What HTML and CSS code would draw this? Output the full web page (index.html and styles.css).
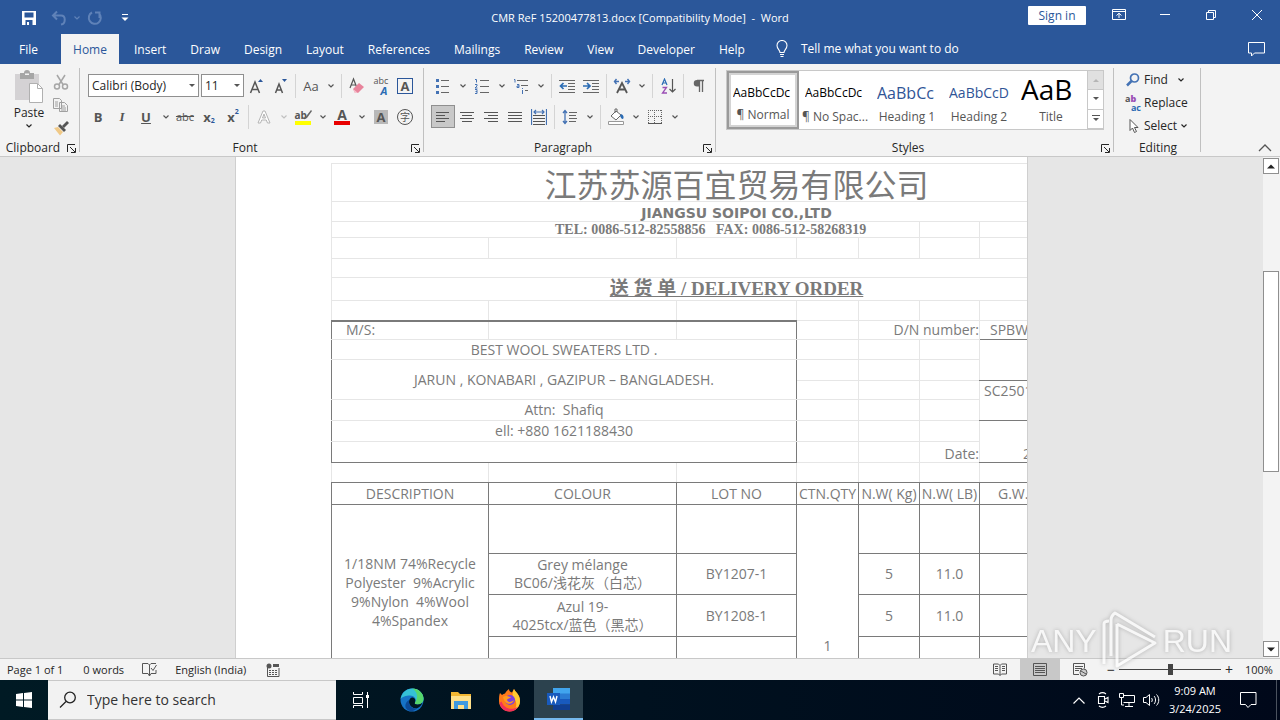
FILE: index.html
```html
<!DOCTYPE html>
<html lang="en">

<head>
    <meta charset="UTF-8">
    <title>CMR ReF 15200477813.docx - Word</title>
    <link rel="stylesheet" href="styles.css">
</head>

<body>
<svg class="defs" aria-hidden="true">
    <symbol id="down" viewBox="0 0 8 8"><path d="M1.5 2.5L4 5l2.5-2.5" fill="none" stroke="currentColor" stroke-width="1.2"/></symbol>
    <symbol id="launch" viewBox="0 0 9 9"><path d="M.5 8V.5H8M3 3l5 5M8.500 4v4.500H4" fill="none" stroke="currentColor"/></symbol>
</svg>

<!-- title bar -->
<header class="titlebar">
    <div class="quick">
        <button title="Save"><svg width="16" height="16" viewBox="0 0 16 16"><path d="M1 1h14v14H1z" fill="#fff"/><path d="M3.500 2.500h9v5h-9zM4.500 10h7v5h-7z" fill="#2b579a"/><path d="M6 12h2v3H6z" fill="#fff"/></svg></button>
        <button title="Undo" class="dim"><svg width="16" height="16" viewBox="0 0 16 16"><path d="M6 1.500L2 5.500l4 4M2.500 5.500H10c5 0 5 8 0 9" fill="none" stroke="currentColor" stroke-width="2"/></svg></button>
        <button title="Undo list" class="dim narrow"><svg width="8" height="8"><use href="#down"/></svg></button>
        <button title="Redo" class="dim"><svg width="16" height="16" viewBox="0 0 16 16"><path d="M5 2.500a6 6 0 1 0 7 1M12.500 8V2.500H8" fill="none" stroke="currentColor" stroke-width="2"/></svg></button>
        <button title="Customize"><svg width="8" height="8" viewBox="0 0 8 8"><path d="M1 .5h6" stroke="#fff"/><path d="M.5 3.500h7L4 7z" fill="#fff"/></svg></button>
    </div>
    <div class="doc-name">CMR ReF 15200477813.docx [Compatibility Mode]&nbsp; -&nbsp; Word</div>
    <div class="win-btns">
        <button class="signin">Sign in</button>
        <button title="Ribbon options"><svg width="14" height="12" viewBox="0 0 14 12"><path d="M.5.5h13v10H.5zM.5 2.500h13M7 9V4.500M4.500 6.500L7 4.200l2.500 2.300" fill="none" stroke="#fff"/></svg></button>
        <button title="Minimize"><svg width="10" height="10" viewBox="0 0 10 10"><path d="M0 4.500h10" stroke="#fff"/></svg></button>
        <button title="Restore"><svg width="10" height="10" viewBox="0 0 10 10"><path d="M.5 2.500h7v7h-7zM2.500 2.500v-2h7v7h-2" fill="none" stroke="#fff"/></svg></button>
        <button title="Close"><svg width="10" height="10" viewBox="0 0 10 10"><path d="M0 0l10 10M10 0L0 10" stroke="#fff"/></svg></button>
    </div>
</header>

<!-- tabs -->
<nav class="tabs">
    <button class="file">File</button>
    <button class="active">Home</button>
    <button>Insert</button>
    <button>Draw</button>
    <button>Design</button>
    <button>Layout</button>
    <button>References</button>
    <button>Mailings</button>
    <button>Review</button>
    <button>View</button>
    <button>Developer</button>
    <button>Help</button>
    <button class="tell"><svg width="14" height="18" viewBox="0 0 14 18"><path d="M5 12.500c0-2.500-3-3.500-3-7a5 5 0 0 1 10 0c0 3.500-3 4.500-3 7zM5 14.500h4M5.500 16.500h3" fill="none" stroke="#fff" stroke-width="1.100"/></svg>Tell me what you want to do</button>
    <button class="comments" title="Comments"><svg width="17" height="15" viewBox="0 0 17 15"><path d="M.5.500h16v10.500H6.500L3.500 14v-3h-3z" fill="none" stroke="#fff"/></svg></button>
</nav>

<!-- ribbon -->
<section class="ribbon">
    <div class="group g-clip">
        <div class="clip-body">
            <button class="paste">
                <svg width="30" height="34" viewBox="0 0 30 34"><path d="M1 4h24v26H1z" fill="#d4d2d4"/><path d="M6 3h4a3 3 0 0 1 6 0h4v6H6z" fill="#a6a6a6"/><path d="M11 3.500h4V5h-4z" fill="#f3f3f3"/><path d="M15.500 13.500h8l5 5v14h-13z" fill="#fff" stroke="#b0b0b0"/><path d="M23.500 13.500v5h5" fill="none" stroke="#b0b0b0"/></svg>
                <span>Paste</span>
                <svg width="8" height="8"><use href="#down"/></svg>
            </button>
            <div class="clip-side">
                <button title="Cut"><svg width="16" height="16" viewBox="0 0 16 16"><g fill="none" stroke="#a6a6a6" stroke-width="1.500"><path d="M4 1l6 9.500M12 1L6 10.500"/><circle cx="4" cy="12.500" r="2.500"/><circle cx="12" cy="12.500" r="2.500"/></g></svg></button>
                <button title="Copy"><svg width="16" height="16" viewBox="0 0 16 16"><path d="M.5 1.500h6l2 2v8h-8zM6.500 5.500h5l3 3v6h-8z" fill="#f3f3f3" stroke="#a0a0a0"/><path d="M2 5h3M2 7h3M2 9h3M8 9h4M8 11h5M8 13h5" stroke="#a0a0a0"/></svg></button>
                <button title="Format Painter"><svg width="16" height="16" viewBox="0 0 16 16"><path d="M1 8l4-1 5 5-3 3.500z" fill="#f0c987"/><path d="M5 6l2-2 6 6-2 2z" fill="#555"/><path d="M9 6l5-5 2 2-5 5z" fill="#555"/></svg></button>
            </div>
        </div>
        <div class="g-name"><span>Clipboard</span><button title="Clipboard settings"><svg width="9" height="9"><use href="#launch"/></svg></button></div>
    </div>

    <div class="group g-font">
        <div class="tools">
            <label class="combo wide"><select aria-label="Font"><option>Calibri (Body)</option></select></label>
            <label class="combo"><select aria-label="Font size"><option>11</option></select></label>
            <button title="Grow Font"><svg width="18" height="18" viewBox="0 0 18 18"><path d="M3.500 16L8 5l4.500 11M5 12.500h6" fill="none" stroke="#555" stroke-width="1.500"/><path d="M11 5l2.500-3L16 5z" fill="#2b579a"/></svg></button>
            <button title="Shrink Font"><svg width="18" height="18" viewBox="0 0 18 18"><path d="M4.500 16L8 7l3.500 9M5.500 13h5" fill="none" stroke="#555" stroke-width="1.500"/><path d="M11 2h5l-2.500 3z" fill="#2b579a"/></svg></button>
            <i class="sep"></i>
            <button class="ltr">Aa</button><button class="arr" title="Case menu"><svg width="8" height="8"><use href="#down"/></svg></button>
            <i class="sep"></i>
            <button title="Clear Formatting"><svg width="18" height="18" viewBox="0 0 18 18"><path d="M2 11l3.500-9L9 11M3 8h5" fill="none" stroke="#555" stroke-width="1.200"/><path d="M5 12l6-6 5 4-6 6H7z" fill="#e8839b"/><path d="M5 12l5 4H7z" fill="#f6c5d0"/></svg></button>
            <button title="Phonetic Guide" class="stack"><span>abc</span><b>A</b></button>
            <button title="Character Border" class="framed"><span>A</span></button>
        </div>
        <div class="tools">
            <button class="ltr bold">B</button>
            <button class="ltr ital">I</button>
            <button class="ltr bold undl">U</button><button class="arr" title="Underline menu"><svg width="8" height="8"><use href="#down"/></svg></button>
            <button class="abc">abc</button>
            <button class="ltr bold low">x<sub>2</sub></button>
            <button class="ltr bold high">x<sup>2</sup></button>
            <i class="sep"></i>
            <button title="Text Effects"><svg width="18" height="18" viewBox="0 0 18 18"><path d="M3 15L8 3h2l5 12h-2.500l-1.200-3H6.700l-1.200 3zM7.500 10h3L9 6z" fill="#fff" stroke="#b5b5b5"/></svg></button><button class="arr off" title="Effects menu"><svg width="8" height="8"><use href="#down"/></svg></button>
            <button class="swatch hl"><span>ab</span><svg width="9" height="10" viewBox="0 0 9 10"><path d="M8 0L2.500 7 1 9.500 4 8 9 1z" fill="#666"/></svg></button><button class="arr" title="Highlight menu"><svg width="8" height="8"><use href="#down"/></svg></button>
            <button class="swatch fc"><span>A</span></button><button class="arr" title="Color menu"><svg width="8" height="8"><use href="#down"/></svg></button>
            <button class="shaded"><span>A</span></button>
            <button class="circled"><span>字</span></button>
        </div>
        <div class="g-name"><span>Font</span><button title="Font settings"><svg width="9" height="9"><use href="#launch"/></svg></button></div>
    </div>

    <div class="group g-para">
        <div class="tools">
            <button title="Bullets"><svg width="16" height="16" viewBox="0 0 16 16"><path d="M6 2.500h8M6 8.500h8M6 14.500h8" stroke="#666"/><path d="M1 1h3v3H1zM1 7h3v3H1zM1 13h3v3H1z" fill="#4472b4"/></svg></button><button class="arr" title="Bullets menu"><svg width="8" height="8"><use href="#down"/></svg></button>
            <button title="Numbering"><svg width="16" height="16" viewBox="0 0 16 16"><path d="M6 2.500h9M6 8.500h9M6 14.500h9" stroke="#666"/><path d="M1 1.500h1.500v3M1 6.500h2v1.500L1 10h2.500M1 11.500h2v4H1M1.500 13.500H3" fill="none" stroke="#4472b4"/></svg></button><button class="arr" title="Numbering menu"><svg width="8" height="8"><use href="#down"/></svg></button>
            <button title="Multilevel List"><svg width="16" height="16" viewBox="0 0 16 16"><path d="M4 2.500h11M8 7.500h7M12 12.500h3" stroke="#666"/><path d="M1 1.500h1v3M4 6.500h2v3H4v-1.500h2M9.500 10v1M9.500 12v4" fill="none" stroke="#4472b4"/></svg></button><button class="arr" title="List menu"><svg width="8" height="8"><use href="#down"/></svg></button>
            <i class="sep"></i>
            <button title="Decrease Indent"><svg width="17" height="14" viewBox="0 0 17 14"><path d="M0 1.500h16M9 4.500h7M9 7.500h7M9 10.500h7M0 13.500h16" stroke="#666"/><path d="M8 7H2M4.500 4L1.500 7l3 3" fill="none" stroke="#2b6cb4" stroke-width="1.700"/></svg></button>
            <button title="Increase Indent"><svg width="17" height="14" viewBox="0 0 17 14"><path d="M0 1.500h16M9 4.500h7M9 7.500h7M9 10.500h7M0 13.500h16" stroke="#666"/><path d="M0 7h6M4 4l3 3-3 3" fill="none" stroke="#2b6cb4" stroke-width="1.700"/></svg></button>
            <i class="sep"></i>
            <button title="Asian Layout"><svg width="18" height="16" viewBox="0 0 18 16"><path d="M4 15L9 5l5 10M6 11.500h6" fill="none" stroke="#555" stroke-width="1.800"/><path d="M6 3.500H2M3.500 1L1.500 3.500l2 2.500M12 3.500h4M14.500 1l2 2.500-2 2.500" fill="none" stroke="#4472b4" stroke-width="1.400"/></svg></button><button class="arr" title="Asian layout menu"><svg width="8" height="8"><use href="#down"/></svg></button>
            <i class="sep"></i>
            <button title="Sort"><svg width="15" height="16" viewBox="0 0 15 16"><path d="M1 7l2.500-6L6 7M2 5h3" fill="none" stroke="#2b6cb4" stroke-width="1.200"/><path d="M1.500 9.500h4l-4 5.500h4.500" fill="none" stroke="#9b4fb5" stroke-width="1.300"/><path d="M11.500 1v13M8.500 11l3 3 3-3" fill="none" stroke="#555" stroke-width="1.200"/></svg></button>
            <i class="sep"></i>
            <button title="Show marks"><svg width="12" height="14" viewBox="0 0 12 14"><path d="M6 1H4a3 3 0 0 0 0 6.500h2z" fill="#666"/><path d="M6.500 1v12M9.500 1v12M4 1.500h7" stroke="#666" stroke-width="1.300"/></svg></button>
        </div>
        <div class="tools">
            <button class="on" title="Align Left"><svg width="16" height="12" viewBox="0 0 16 12"><path d="M1 1.500h13M1 4.500h9M1 7.500h13M1 10.500h9" stroke="#555"/></svg></button>
            <button title="Center"><svg width="16" height="12" viewBox="0 0 16 12"><path d="M1 1.500h14M3 4.500h10M1 7.500h14M3 10.500h10" stroke="#555"/></svg></button>
            <button title="Align Right"><svg width="16" height="12" viewBox="0 0 16 12"><path d="M1 1.500h14M5 4.500h10M1 7.500h14M5 10.500h10" stroke="#555"/></svg></button>
            <button title="Justify"><svg width="16" height="12" viewBox="0 0 16 12"><path d="M1 1.500h14M1 4.500h14M1 7.500h14M1 10.500h14" stroke="#555"/></svg></button>
            <button title="Distributed"><svg width="16" height="16" viewBox="0 0 16 16"><path d="M.5 0v16M15.500 0v16M3 3h10M5 1L3 3l2 2M11 1l2 2-2 2" fill="none" stroke="#4472b4" stroke-width="1.200"/><path d="M2 6.500h12M2 9.500h12M2 12.500h12M2 15.500h12" stroke="#555"/></svg></button>
            <i class="sep"></i>
            <button title="Line Spacing"><svg width="16" height="16" viewBox="0 0 16 16"><path d="M7 3.500h8M7 6.500h7M7 9.500h8M7 12.500h7" stroke="#666"/><path d="M3 1v14M1 4l2-2.500L5 4M1 12l2 2.500L5 12" fill="none" stroke="#4472b4" stroke-width="1.300"/></svg></button><button class="arr" title="Spacing menu"><svg width="8" height="8"><use href="#down"/></svg></button>
            <i class="sep"></i>
            <button title="Shading"><svg width="17" height="17" viewBox="0 0 17 17"><path d="M3 8l5-5 5 4-5 5zM7 5V1h2v3" fill="#fff" stroke="#666"/><path d="M13 6c3 1 3 4 2 5-2 0-2-2-3-3z" fill="#2b6cb4"/><path d="M.5 13.500h15v3H.5z" fill="#fff" stroke="#999"/></svg></button><button class="arr" title="Shading menu"><svg width="8" height="8"><use href="#down"/></svg></button>
            <button title="Borders"><svg width="14" height="14" viewBox="0 0 14 14"><path d="M.5 0v14M13.500 0v14M0 .5h14M6.500 0v14M0 6.500h14" stroke="#666" stroke-dasharray="1 1"/><path d="M0 13.500h14" stroke="#555"/></svg></button><button class="arr" title="Borders menu"><svg width="8" height="8"><use href="#down"/></svg></button>
        </div>
        <div class="g-name"><span>Paragraph</span><button title="Paragraph settings"><svg width="9" height="9"><use href="#launch"/></svg></button></div>
    </div>

    <div class="group g-styles">
        <div class="gallery">
            <button class="style picked"><span class="sample">AaBbCcDc</span><span class="cap">¶ Normal</span></button>
            <button class="style"><span class="sample">AaBbCcDc</span><span class="cap">¶ No Spac...</span></button>
            <button class="style"><span class="sample h1">AaBbCc</span><span class="cap">Heading 1</span></button>
            <button class="style"><span class="sample h2">AaBbCcD</span><span class="cap">Heading 2</span></button>
            <button class="style"><span class="sample big">AaB</span><span class="cap">Title</span></button>
            <div class="gal-scroll">
                <button class="off" title="Row up"><svg width="6" height="4" viewBox="0 0 6 4"><path d="M0 4l3-3 3 3z" fill="#b5b5b5"/></svg></button>
                <button title="Row down"><svg width="6" height="4" viewBox="0 0 6 4"><path d="M0 0h6L3 3z" fill="#555"/></svg></button>
                <button title="More"><svg width="8" height="8" viewBox="0 0 8 8"><path d="M0 .5h8" stroke="#555"/><path d="M1 3h6L4 6z" fill="#555"/></svg></button>
            </div>
        </div>
        <div class="g-name"><span>Styles</span><button title="Styles pane"><svg width="9" height="9"><use href="#launch"/></svg></button></div>
    </div>

    <div class="group g-edit">
        <div class="edit-list">
            <button><svg width="16" height="16" viewBox="0 0 16 16"><circle cx="9.500" cy="6" r="4" fill="none" stroke="#4472b4" stroke-width="1.700"/><path d="M6.500 9L2 13.500" stroke="#4472b4" stroke-width="2.500"/></svg>Find<svg class="gap" width="8" height="8"><use href="#down"/></svg></button>
            <button><span class="rep"><span>a<b>b</b></span><span class="ac">ac</span></span>Replace</button>
            <button><svg width="16" height="16" viewBox="0 0 16 16"><path d="M5 1.500v11l2.500-2.500 2 4.500 2-1-2-4H13z" fill="#fff" stroke="#555"/></svg>Select<svg width="8" height="8"><use href="#down"/></svg></button>
        </div>
        <div class="g-name"><span>Editing</span></div>
    </div>
    <button class="collapse" title="Collapse the Ribbon"><svg width="14" height="8" viewBox="0 0 14 8"><path d="M1 7l6-6 6 6" fill="none" stroke="#555" stroke-width="1.300"/></svg></button>
</section>

<!-- document -->
<main class="workspace">
    <div class="desk">
        <div class="page">
            <table class="order">
                <colgroup><col class="c-desc"><col class="c-colour"><col class="c-lot"><col class="c-ctn"><col class="c-kg"><col class="c-lb"><col class="c-gw"><col class="c-gw"></colgroup>
                <tr class="h38"><td colspan="8" class="company">江苏苏源百宜贸易有限公司</td></tr>
                <tr class="h20"><td colspan="8" class="company-en">JIANGSU SOIPOI CO.,LTD</td></tr>
                <tr class="h16"><td colspan="5" class="tel">TEL: 0086-512-82558856&nbsp;&nbsp; FAX: 0086-512-58268319</td><td></td><td colspan="2"></td></tr>
                <tr class="h21"><td></td><td></td><td></td><td></td><td></td><td></td><td colspan="2"></td></tr>
                <tr class="h19"><td colspan="8"></td></tr>
                <tr class="h23"><td colspan="8" class="order-title">送 货 单 / DELIVERY ORDER</td></tr>
                <tr class="h20"><td class="over"></td><td class="over"></td><td class="over"></td><td></td><td></td><td></td><td colspan="2"></td></tr>
                <tr class="h19"><td class="bl ms">M/S:</td><td></td><td class="br"></td><td></td><td colspan="2" class="right">D/N number:</td><td colspan="2" class="left bb sp">SPBW</td></tr>
                <tr class="h20"><td colspan="3" class="bl br">BEST WOOL SWEATERS LTD .</td><td></td><td></td><td></td><td colspan="2" rowspan="2" class="bb"></td></tr>
                <tr class="h21"><td colspan="3" rowspan="2" class="bl br">JARUN , KONABARI , GAZIPUR – BANGLADESH.</td><td></td><td></td><td></td></tr>
                <tr class="h19"><td></td><td></td><td></td><td colspan="2" rowspan="2" class="left top bb sc">SC2501</td></tr>
                <tr class="h21"><td colspan="3" class="bl br">Attn:&nbsp; Shafiq</td><td></td><td></td><td></td></tr>
                <tr class="h21"><td colspan="3" class="bl br">ell: +880 1621188430</td><td></td><td></td><td></td><td colspan="2" rowspan="2" class="left bottom bb dt">2025</td></tr>
                <tr class="h21"><td colspan="3" class="bl br bb"></td><td></td><td></td><td class="right bottom">Date:</td></tr>
                <tr class="h20 last"><td></td><td></td><td></td><td></td><td></td><td></td><td colspan="2"></td></tr>
                <tr class="h22 items"><th>DESCRIPTION</th><th>COLOUR</th><th>LOT NO</th><th>CTN.QTY</th><th>N.W( Kg)</th><th>N.W( LB)</th><th class="gw">G.W.</th><th></th></tr>
                <tr class="h49 items"><td rowspan="4" class="desc">1/18NM 74%Recycle<br>Polyester&nbsp; 9%Acrylic<br>9%Nylon&nbsp; 4%Wool<br>4%Spandex</td><td></td><td></td><td rowspan="4" class="ctn">1</td><td></td><td></td><td></td><td></td></tr>
                <tr class="h41 items"><td>Grey mélange<br>BC06/浅花灰（白芯）</td><td>BY1207-1</td><td>5</td><td>11.0</td><td></td><td></td></tr>
                <tr class="h42 items"><td>Azul 19-<br>4025tcx/蓝色（黑芯）</td><td>BY1208-1</td><td>5</td><td>11.0</td><td></td><td></td></tr>
                <tr class="h43 items"><td></td><td></td><td></td><td></td><td></td><td></td></tr>
            </table>
        </div>
    </div>
    <div class="scroll">
        <button title="Scroll up"><svg width="8" height="5" viewBox="0 0 8 5"><path d="M0 4.500L4 .5l4 4z" fill="#222"/></svg></button>
        <div class="track"><div class="thumb"></div></div>
        <button title="Scroll down"><svg width="8" height="5" viewBox="0 0 8 5"><path d="M0 .5h8l-4 4z" fill="#222"/></svg></button>
    </div>
</main>

<!-- status bar -->
<footer class="status">
    <span>Page 1 of 1</span>
    <span class="words">0 words</span>
    <svg class="proof" width="15" height="14" viewBox="0 0 15 14"><path d="M7.500 2L6 .5H.5v10H6L7.500 13zM7.500 2L9 .5h5M7.500 13L9 10.500h5V7M9 5l2 2.500L14.500 2" fill="none" stroke="#555"/></svg>
    <span class="lang">English (India)</span>
    <svg width="14" height="14" viewBox="0 0 14 14"><path d="M1.500 5v8.500h11.500V5" fill="none" stroke="#555"/><path d="M3 7.500h9M3 9.500h9M3 11.500h9" stroke="#555" stroke-dasharray="2 1"/><path d="M7 1h6v3H7z" fill="#555"/><circle cx="3" cy="3" r="2.500" fill="#555"/></svg>
    <div class="views">
        <button title="Read Mode"><svg width="14" height="13" viewBox="0 0 14 13"><path d="M7 2.500L5.500 1H.5v10h5L7 12.500 8.500 11h5V1h-5zM7 2.500v10M2 3.500h3M2 5.500h3M2 7.500h3M9 3.500h3M9 5.500h3M9 7.500h3" fill="none" stroke="#555"/></svg></button>
        <button class="on" title="Print Layout"><svg width="14" height="13" viewBox="0 0 14 13"><path d="M.5.500h13v12H.5zM2 3.500h10M2 5.500h10M2 7.500h10M2 9.500h10" fill="none" stroke="#555"/></svg></button>
        <button title="Web Layout"><svg width="15" height="14" viewBox="0 0 15 14"><path d="M6 11.500H.5V.5h11v5M2 3.500h8M2 5.500h7M2 7.500h4" fill="none" stroke="#555"/><circle cx="10.500" cy="9.500" r="3.500" fill="#ccc" stroke="#555"/><path d="M8 8l5 3" stroke="#555"/></svg></button>
    </div>
    <div class="zoom">
        <button title="Zoom Out">−</button>
        <input type="range" min="10" max="190" value="100" aria-label="Zoom">
        <button title="Zoom In">+</button>
    </div>
    <span class="pct">100%</span>
</footer>

<!-- windows taskbar -->
<footer class="taskbar">
    <button class="start" title="Start"><svg width="16" height="16" viewBox="0 0 16 16"><path d="M0 2l7-1v6.500H0zM8 1l8-1v7.500H8zM0 8.500h7V15l-7-1zM8 8.500h8V16l-8-1z" fill="#fff"/></svg></button>
    <label class="search"><svg width="18" height="18" viewBox="0 0 18 18"><circle cx="11" cy="6.500" r="5.300" fill="none" stroke="#222" stroke-width="1.300"/><path d="M7 10.500L1 16.500" stroke="#222" stroke-width="1.300"/></svg><input type="text" placeholder="Type here to search"></label>
    <div class="apps">
        <button title="Task View"><svg width="18" height="16" viewBox="0 0 18 16"><path d="M1.500 0v2.500h9V0M1.500 5.500h9v6h-9zM1.500 16v-2.500h9V16M15.500 0v16" fill="none" stroke="#fff"/><path d="M14 3h3v3h-3z" fill="#fff"/></svg></button>
        <button title="Edge"><svg width="24" height="24" viewBox="0 0 24 24"><circle cx="12" cy="12" r="11.500" fill="#1673c6"/><path d="M.6 11C2 4 7 .5 12 .5c7 0 11.500 5 11.500 10 0 4-3 6-6 6-2 0-3.500-.8-2.500-2 2-4-1-7-5-7-4 0-8 1.500-9.400 3.500z" fill="#35c1d5"/><path d="M12 .5c7 0 11.500 5 11.500 10 0 4-3 6-6 6-2 0-3.500-.8-2.500-2C19 9 17 3 12 .5z" fill="#56d66b"/><path d="M9 14c0-3 2-5 4-4.500 2 .5 3 2.500 2 5-1 1.200.5 2 2.500 2 2 0 4-.8 5-2-1 3-3 5-6 6-4 0-7.500-3-7.500-6.500z" fill="#001722"/><path d="M9 14c0 4 3.500 7 8 6.500-2 2-5 3-7 2.500-6-1.500-6-8-1-11z" fill="#0c4a97"/></svg></button>
        <button title="File Explorer"><svg width="22" height="20" viewBox="0 0 22 20"><path d="M1 2h7l2 2h11v15H1z" fill="#f2b632"/><path d="M1 6h20v13H1z" fill="#ffe08a"/><path d="M4 11h14v8h-4v-4H8v4H4z" fill="#3f9ae0"/></svg></button>
        <button title="Firefox"><svg width="23" height="24" viewBox="0 0 23 24"><path d="M2 5l2 2c1-1 2-1.500 3-1.500C8 3 10 2 11 1c0 2 1 3 3 3.500L16 1c1 3 6 5 6 12 0 6-5 10.500-10.500 10.500S1 19 1 13c0-3 0-6 1-8z" fill="#ff7a1a"/><path d="M16 1c1 3 6 5 6 12 0 4-2 7-5 9 2-4 2-9-2-13-1-3 0-6 1-8z" fill="#ffc933"/><path d="M1.500 15c1 5 5 8.500 10 8.500 4 0 7-2 9-5-6 4-14 3-17-5z" fill="#f2305b"/><circle cx="12" cy="12" r="5" fill="#7b3fe0"/><path d="M5 9c3-2 5 0 8 0-1 2-3 1-4 3 1 3 5 2 7 0-1 5-9 6-11-3z" fill="#ff9a1f"/></svg></button>
        <button class="on" title="Word"><svg width="24" height="22" viewBox="0 0 24 22"><path d="M6 0h17v6H6z" fill="#41a5ee"/><path d="M6 5.500h17V11H6z" fill="#2b7cd3"/><path d="M6 11h17v5.500H6z" fill="#185abd"/><path d="M6 16.500h17V22H6z" fill="#103f91"/><path d="M0 5h13v12H0z" fill="#185abd"/><path d="M3 8l1.500 6L6.500 9l2 5L10 8" fill="none" stroke="#fff" stroke-width="1.400"/></svg></button>
    </div>
    <div class="tray">
        <button title="Hidden icons"><svg width="12" height="7" viewBox="0 0 12 7"><path d="M.5 6.500L6 1l5.500 5.500" fill="none" stroke="#fff" stroke-width="1.200"/></svg></button>
        <button title="Meet Now"><svg width="14" height="16" viewBox="0 0 14 16"><path d="M2.500 4.500h6v7h-6zM9 7l3-1.500v5L9 9M3 2c2-1.500 5-1.500 7 0M3 14c2 1.500 5 1.500 7 0" fill="none" stroke="#fff" stroke-width="1.100"/></svg></button>
        <button title="Network"><svg width="16" height="14" viewBox="0 0 16 14"><path d="M4.500 2.500h11v7h-11M10 10v3M6 13.500h8M.5.500h4v4h-4zM2.500 5v7H5" fill="none" stroke="#fff"/></svg></button>
        <button title="Volume"><svg width="17" height="14" viewBox="0 0 17 14"><path d="M.5 4.500h2.500L6.500 1.500v11L3 9.500H.5zM8.500 5c1 1 1 3 0 4M11 3c2 2 2 6 0 8M13.500 1.500c3 3 3 8 0 11" fill="none" stroke="#fff"/></svg></button>
        <div class="clock">9:09 AM<br>3/24/2025</div>
        <button class="note" title="Notifications"><svg width="17" height="17" viewBox="0 0 17 17"><path d="M.5.500h15.500v12H11L8 15.500 5.500 12.500h-5z" fill="none" stroke="#fff"/></svg></button>
    </div>
</footer>

<div class="watermark" aria-hidden="true">
    <span>ANY</span>
    <svg width="58" height="62" viewBox="0 0 58 62"><g fill="none" stroke="#fff" stroke-width="3" stroke-linejoin="round"><path d="M3 54V14q0-3 5-3M10 46V10q0-4 4-7l40 24"/><path d="M16 14v42l38-23-38-19"/></g></svg>
    <span>RUN</span>
</div>
</body>

</html>
```
FILE: styles.css
```css
* {
    box-sizing: border-box;
}
body {
    margin: 0;
    height: 100vh;
    display: flex;
    flex-direction: column;
    overflow: hidden;
    position: relative;
    font: 12px/16px "Open Sans", "Noto Sans CJK SC", sans-serif;
    color: #262626;
    background: #e6e6e6;
}
button {
    font: inherit;
    color: inherit;
    background: none;
    border: 0;
    padding: 0;
    display: flex;
    align-items: center;
    justify-content: center;
    white-space: nowrap;
}
svg {
    display: block;
    flex: none;
}
.defs {
    display: none;
}

/* title bar */
.titlebar {
    display: grid;
    grid-template-columns: 1fr auto 1fr;
    height: 34px;
    background: #2b579a;
    color: #fff;
}
.quick {
    display: flex;
    padding-left: 14px;
}
.quick button {
    width: 30px;
}
.quick .narrow {
    width: 6px;
}
.quick .dim {
    color: #5f82b8;
}
.doc-name {
    line-height: 35px;
    font-size: 11px;
}
.win-btns {
    display: flex;
    justify-content: flex-end;
}
.win-btns button {
    width: 46px;
    height: 30px;
}
.win-btns .signin {
    width: 58px;
    height: 19px;
    margin: 6px 10px 0 0;
    background: #fff;
    color: #2b579a;
    border-radius: 1px;
}

/* tabs */
.tabs {
    display: flex;
    height: 30px;
    background: #2b579a;
    color: #fff;
}
.tabs button {
    padding: 2px 12px 0;
}
.tabs .file {
    width: 61px;
    padding-right: 16px;
}
.tabs .active {
    background: #f3f3f3;
    color: #2b579a;
    width: 58px;
    padding: 2px 0 0;
    margin-right: 3px;
}
.tabs .tell {
    gap: 12px;
    padding: 0 0 0 18px;
}
.tabs .comments {
    margin-left: auto;
    padding: 0 15px 0 0;
}

/* ribbon */
.ribbon {
    display: flex;
    height: 93px;
    background: #f3f3f3;
    border-bottom: 1px solid #c8c8c8;
}
.group {
    display: flex;
    flex-direction: column;
    border-right: 1px solid #c0c0c0;
    margin: 4px 0;
    padding-top: 6px;
    flex: none;
}
.g-clip {
    width: 80px;
    padding-top: 2px;
}
.g-font {
    width: 344px;
}
.g-para {
    width: 292px;
}
.g-styles {
    width: 398px;
    padding-top: 2px;
}
.g-edit {
    width: 87px;
    padding-top: 0;
}
.g-name {
    display: flex;
    margin: auto 0 -4px;
    height: 16px;
    padding-left: 2px;
}
.g-name span {
    flex: 1;
    text-align: center;
}
.g-name button {
    width: 15px;
}
.clip-body {
    display: flex;
    padding-left: 13px;
}
.paste {
    flex-direction: column;
    width: 32px;
    height: 60px;
    justify-content: space-between;
}
.clip-side button {
    width: 32px;
    height: 23px;
}
.tools {
    display: flex;
    align-items: center;
    height: 23px;
    margin: 0 0 8px;
    padding-left: 6px;
    color: #555;
}
.g-para .tools {
    padding-left: 7px;
}
.tools button {
    width: 24px;
    height: 23px;
}
.tools .arr {
    width: 15px;
}
.tools .off {
    color: #c0c0c0;
}
.tools .on {
    background: #c8c8c8;
    border: 1px solid #8f8f8f;
}
.sep {
    width: 1px;
    height: 24px;
    margin: 0 3px;
    background: #d4d4d4;
}
.combo {
    position: relative;
    width: 43px;
}
.combo.wide {
    width: 111px;
    margin: 0 2px;
}
.combo select {
    appearance: none;
    width: 100%;
    height: 23px;
    padding: 0 3px;
    border: 1px solid #8f8f8f;
    border-radius: 0;
    background: #fff;
    font: inherit;
    color: #262626;
}
.combo::after {
    content: "";
    position: absolute;
    right: 4px;
    top: 10px;
    border: 3px solid transparent;
    border-top-color: #555;
    border-bottom: 0;
}
.ltr {
    font-size: 13px;
}
.bold {
    font-weight: bold;
}
.ital {
    font-family: "Liberation Serif", serif;
    font-style: italic;
    font-weight: bold;
}
.undl {
    text-decoration: underline;
}
.tools sub, .tools sup {
    font-size: 7px;
    line-height: 8px;
    color: #2b579a;
}
.low sub {
    align-self: flex-end;
    margin-bottom: 3px;
}
.high sup {
    align-self: flex-start;
    margin-top: 3px;
}
.abc {
    font-size: 11px;
    text-decoration: line-through;
}
.stack {
    flex-direction: column;
    line-height: 10px;
    font-size: 9px;
}
.stack b {
    font-style: italic;
    font-size: 11px;
    color: #2b6cb4;
    padding-left: 6px;
}
.framed span {
    width: 16px;
    border: 1px solid #2b579a;
    line-height: 14px;
    font-size: 13px;
    font-weight: bold;
}
.shaded span {
    width: 14px;
    background: #b8b8b8;
    line-height: 14px;
    font-size: 13px;
    font-weight: bold;
}
.circled span {
    width: 16px;
    border: 1px solid #555;
    border-radius: 50%;
    line-height: 14px;
    font-size: 10px;
}
.swatch span {
    width: 16px;
    line-height: 12px;
    font-size: 14px;
    font-weight: bold;
    border-bottom: 4px solid #e80000;
}
.hl span {
    font-size: 10px;
    text-align: left;
    border-color: #ffff00;
}
.hl svg {
    margin: -4px 0 0 -8px;
}

/* styles gallery */
.gallery {
    display: flex;
    height: 60px;
    margin: 0 9px 0 10px;
    border: 1px solid #c8c8c8;
    background: #fff;
}
.style {
    width: 72px;
    flex-direction: column;
    justify-content: flex-start;
    padding: 8px 6px 0;
}
.style.picked {
    border: 2px solid #9a9a9a;
    box-shadow: inset 0 0 0 2px #d4d4d4;
    padding: 6px 4px 0;
}
.sample {
    width: 100%;
    height: 26px;
    line-height: 28px;
    overflow: hidden;
    text-align: left;
    color: #000;
}
.sample.h1 {
    font-size: 16px;
    color: #2f5496;
}
.sample.h2 {
    font-size: 14px;
    color: #2f5496;
}
.sample.big {
    font-size: 28px;
    line-height: 20px;
}
.cap {
    line-height: 24px;
    color: #555;
}
.gal-scroll {
    display: flex;
    flex-direction: column;
    flex: 1;
    border-left: 1px solid #c8c8c8;
}
.gal-scroll button {
    flex: 1;
    border-bottom: 1px solid #c8c8c8;
}
.gal-scroll .off {
    background: #e0e0e0;
}
.edit-list button {
    height: 23px;
    margin-left: 11px;
    gap: 3px;
}
.edit-list .gap {
    margin-left: 6px;
}
.rep {
    width: 16px;
    font-size: 9px;
    font-weight: bold;
    line-height: 9px;
    text-align: left;
    color: #555;
}
.rep span {
    display: block;
}
.rep b {
    color: #9b4fb5;
}
.rep .ac {
    color: #2b6cb4;
    text-align: right;
}
.collapse {
    margin: auto 8px 4px auto;
}

/* document */
.workspace {
    flex: 1;
    min-height: 0;
    display: flex;
}
.desk {
    flex: 1;
    min-width: 0;
    overflow: hidden;
    display: flex;
    justify-content: center;
}
.page {
    width: 793px;
    padding: 6px 0 0 95px;
    background: #fff;
    border: solid #cfcfcf;
    border-width: 0 1px;
    overflow: hidden;
}
.order {
    table-layout: fixed;
    width: 811px;
    border-collapse: collapse;
    border: 1px solid #e6e6e6;
    font-size: 14px;
    line-height: 16px;
    color: #7a7a7a;
    text-align: center;
}
.order td, .order th {
    padding: 0;
    border: 0 solid #e6e6e6;
    border-width: 0 1px 1px 0;
    font-weight: normal;
    white-space: nowrap;
}
.c-desc { width: 157px; }
.c-colour { width: 188px; }
.c-lot { width: 120px; }
.c-ctn { width: 62px; }
.c-kg { width: 61px; }
.c-lb { width: 60px; }
.c-gw { width: 81px; }
.h16 { height: 16px; }
.h19 { height: 19px; }
.h20 { height: 20px; }
.h21 { height: 21px; }
.h22 { height: 22px; }
.h23 { height: 23px; }
.h38 { height: 38px; }
.h41 { height: 41px; }
.h42 { height: 42px; }
.h43 { height: 43px; }
.h49 { height: 49px; }
.order .company {
    font: 32px/36px "Noto Sans CJK SC", sans-serif;
}
.order .company-en {
    font: bold 14px/16px "DejaVu Sans", sans-serif;
    padding-top: 2px;
}
.order .tel {
    font: bold 14px/15px "Liberation Serif", serif;
    text-align: left;
    padding-left: 223px;
}
.order .order-title {
    font: bold 19px/20px "Liberation Serif", "Noto Sans CJK SC", serif;
    text-decoration: underline;
}
.order .over {
    border-bottom: 2px solid #7a7a7a;
}
.order .bl {
    border-left: 1px solid #7a7a7a;
}
.order .br {
    border-right-color: #7a7a7a;
}
.order .bb, .order .last td {
    border-bottom-color: #7a7a7a;
}
.order .items td, .order .items th {
    border: 1px solid #7a7a7a;
}
.order .left {
    text-align: left;
}
.order .right {
    text-align: right;
}
.order .top {
    vertical-align: top;
    padding-top: 2px;
}
.order .bottom {
    vertical-align: bottom;
}
.order .ms {
    text-align: left;
    padding-left: 14px;
}
.order .sp {
    padding-left: 10px;
}
.order .sc {
    padding-left: 4px;
}
.order .dt {
    padding-left: 43px;
}
.order .gw {
    text-align: left;
    padding-left: 18px;
}
.order .items td {
    line-height: 18px;
}
.order .items .desc {
    line-height: 19px;
}
.order .items .ctn {
    vertical-align: bottom;
    padding-bottom: 24px;
}
.scroll {
    width: 17px;
    display: flex;
    flex-direction: column;
    padding: 1px 1px 1px 0;
    background: #f3f3f3;
}
.scroll button {
    height: 16px;
    background: #fff;
    border: 1px solid #8f8f8f;
}
.track {
    flex: 1;
    padding-top: 97px;
}
.thumb {
    height: 201px;
    background: #fff;
    border: 1px solid #8f8f8f;
}

/* status bar */
.status {
    display: flex;
    align-items: center;
    height: 22px;
    padding-left: 7px;
    background: #f3f3f3;
    border-top: 1px solid #c8c8c8;
    font-size: 11px;
}
.words {
    margin-left: 20px;
}
.proof {
    margin: 0 18px;
}
.lang {
    margin-right: 20px;
}
.views {
    display: flex;
    align-self: stretch;
    margin-left: auto;
}
.views button {
    width: 40px;
}
.views .on {
    background: #c8c8c8;
}
.zoom {
    display: flex;
    align-items: center;
    margin-left: 4px;
}
.zoom button {
    width: 14px;
    font-size: 14px;
}
.zoom input {
    appearance: none;
    width: 102px;
    height: 12px;
    margin: 0 1px;
    background: linear-gradient(#444, #444) center / 100% 1px no-repeat;
}
.zoom input::-webkit-slider-thumb {
    appearance: none;
    width: 5px;
    height: 11px;
    background: #444;
}
.pct {
    width: 44px;
    padding-left: 9px;
}

/* taskbar */
.taskbar {
    display: flex;
    height: 40px;
    background: linear-gradient(90deg, #001a24, #00081a);
    color: #fff;
}
.start {
    width: 48px;
}
.search {
    display: flex;
    align-items: center;
    width: 288px;
    padding-left: 11px;
    gap: 10px;
    background: #f2f2f2;
    border: solid #c8c8c8;
    border-width: 1px 0;
}
.search input {
    width: 200px;
    border: 0;
    padding: 0;
    background: none;
    font: 14px/20px "Open Sans", sans-serif;
}
.search input::placeholder {
    color: #333;
    opacity: 1;
}
.apps {
    display: flex;
}
.apps button {
    width: 49px;
}
.apps button:first-child {
    margin-right: 2px;
}
.apps .on {
    background: #2c424e;
    border-bottom: 2px solid #76b9ed;
}
.tray {
    display: flex;
    margin-left: auto;
    border-right: 1px solid #4a525e;
    margin-right: 3px;
}
.tray button {
    width: 24px;
}
.clock {
    width: 62px;
    line-height: 18px;
    padding: 2px 0 0 2px;
    text-align: center;
    font-size: 11px;
}
.tray .note {
    width: 46px;
    margin-right: 5px;
}

.watermark {
    position: absolute;
    right: 48px;
    bottom: 48px;
    display: flex;
    align-items: center;
    gap: 4px;
    opacity: .7;
    color: #fff;
    font: 32px/32px "Liberation Sans", sans-serif;
    filter: drop-shadow(0 0 2px #999);
    pointer-events: none;
}
```
